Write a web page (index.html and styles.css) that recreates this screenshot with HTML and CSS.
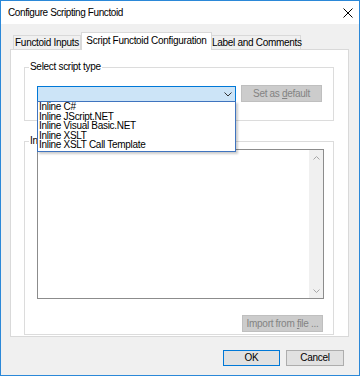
FILE: index.html
```html
<!DOCTYPE html>
<html lang="en">
<head>
    <meta charset="UTF-8">
    <title>Configure Scripting Functoid</title>
    <link rel="stylesheet" href="styles.css">
</head>
<body>
    <div class="window">
        <div class="titlebar">
            <span class="title">Configure Scripting Functoid</span>
            <svg class="close" width="10" height="10" viewBox="0 0 10 10">
                <path d="M0.5 0.5L9.5 9.5M9.5 0.5L0.5 9.5" stroke="#000" stroke-width="1" fill="none"/>
            </svg>
        </div>
        <div class="client">
            <div class="tabs">
                <div class="tab tab-inputs">Functoid Inputs</div>
                <div class="tab tab-config active">Script Functoid Configuration</div>
                <div class="tab tab-label">Label and Comments</div>
            </div>
            <div class="panel">
                <fieldset class="group group-type">
                    <legend>Select script <u>t</u>ype</legend>
                    <div class="row">
                        <div class="combo">
                            <svg class="chevron" width="8" height="5" viewBox="0 0 8 5">
                                <path d="M0.5 0.5L4 4L7.5 0.5" stroke="#333" stroke-width="1" fill="none"/>
                            </svg>
                            <ul class="droplist">
                                <li>Inline C#</li>
                                <li>Inline JScript.NET</li>
                                <li>Inline Visual Basic.NET</li>
                                <li>Inline XSLT</li>
                                <li>Inline XSLT Call Template</li>
                            </ul>
                        </div>
                        <button class="btn btn-default-set" disabled>Set as <u>d</u>efault</button>
                    </div>
                </fieldset>
                <fieldset class="group group-buffer">
                    <!-- the open list lies over most of this caption -->
                    <legend>Inline script buffer</legend>
                    <div class="buffer">
                        <div class="buffer-text"></div>
                        <div class="vscroll">
                            <svg width="7" height="4" viewBox="0 0 7 4"><path d="M0.5 3.5L3.5 0.5L6.5 3.5" stroke="#a6a6a6" fill="none"/></svg>
                            <svg width="7" height="4" viewBox="0 0 7 4"><path d="M0.5 0.5L3.5 3.5L6.5 0.5" stroke="#a6a6a6" fill="none"/></svg>
                        </div>
                    </div>
                    <div class="row row-right">
                        <button class="btn btn-import" disabled>Import from <u>f</u>ile ...</button>
                    </div>
                </fieldset>
            </div>
            <div class="actions">
                <button class="btn btn-ok">OK</button>
                <button class="btn btn-cancel">Cancel</button>
            </div>
        </div>
    </div>
</body>
</html>
```
FILE: styles.css
```css
* {
    box-sizing: border-box;
}
body {
    margin: 0;
    font-family: "Liberation Sans", Arial, sans-serif;
    font-size: 10px;
    letter-spacing: -0.3px;
    color: #000;
}
.window {
    width: 360px;
    height: 376px;
    border: 1px solid #2b88d8;
    background-color: #f0f0f0;
    display: flex;
    flex-direction: column;
}
.titlebar {
    height: 23px;
    background-color: #fff;
    display: flex;
    align-items: center;
    justify-content: space-between;
    padding: 0 6px 0 7px;
    letter-spacing: -0.4px;
}
.close {
    display: block;
}
.client {
    flex: 1;
    display: flex;
    flex-direction: column;
    padding: 8px 10px 0 9px;
}

/* tabs */
.tabs {
    display: flex;
    align-items: flex-end;
    height: 17px;
    margin-left: 3px;
    position: relative;
    z-index: 1;
}
.tab {
    height: 14px;
    border: 1px solid #d9d9d9;
    border-bottom: none;
    background-color: #f0f0f0;
    text-align: center;
    line-height: 14px;
    white-space: nowrap;
}
.tab-inputs { width: 68px; }
.tab-config { width: 131px; }
.tab-label { width: 90px; margin-left: -1px; }
.tab.active {
    height: 18px;
    margin-bottom: -1px;
    background-color: #fff;
    line-height: 15px;
    position: relative;
    z-index: 2;
}
.panel {
    height: 288px;
    border: 1px solid #d9d9d9;
    background-color: #fff;
    padding: 0 14px 0 13px;
}

/* group boxes */
.group {
    margin: 0;
    min-width: 0;
    border: 1px solid #dcdcdc;
    padding: 0 9px 0 12px;
}
.group legend {
    padding: 0 1px;
    margin-left: -8px;
    line-height: 12px;
}
.group legend u {
    text-decoration: none;
}
.group-type {
    margin-top: 11px;
    padding-top: 12px;
    padding-bottom: 18px;
}
.group-buffer {
    margin-top: 14px;
    padding-top: 2px;
    padding-bottom: 2px;
}
.row {
    display: flex;
    align-items: flex-end;
    gap: 5px;
}
.row-right {
    justify-content: flex-end;
    margin-top: 16px;
    padding-right: 1px;
}

/* combo box with open list */
.combo {
    position: relative;
    width: 199px;
    height: 16px;
    border: 1px solid #0078d7;
    background-color: #cce4f7;
}
.chevron {
    position: absolute;
    right: 3px;
    top: 5px;
}
.droplist {
    position: absolute;
    left: -1px;
    top: 14px;
    width: 199px;
    margin: 0;
    padding: 0 0 1px 1px;
    list-style: none;
    background-color: #fff;
    border: 1px solid #3f74bf;
    box-shadow: 2px 2px 2px rgba(0,0,0,0.2);
    z-index: 5;
}
.droplist li {
    line-height: 9.5px;
    white-space: nowrap;
}

/* buffer */
.buffer {
    display: flex;
    height: 150px;
    border: 1px solid #8c8c8c;
    background-color: #fff;
}
.buffer-text {
    flex: 1;
}
.vscroll {
    width: 14px;
    background-color: #f0f0f0;
    display: flex;
    flex-direction: column;
    justify-content: space-between;
    align-items: center;
    padding: 6px 0 5px;
}
.vscroll svg {
    display: block;
}

/* buttons */
.btn {
    font-family: inherit;
    font-size: 10px;
    letter-spacing: -0.3px;
    height: 17px;
    padding: 0;
    border: 1px solid #adadad;
    background-color: #e1e1e1;
    color: #000;
    line-height: 14px;
    white-space: nowrap;
}
.btn:disabled {
    background-color: #cccccc;
    border-color: #bfbfbf;
    color: #838383;
}
.btn-default-set { width: 81px; }
.btn-import { width: 81px; }
.actions {
    display: flex;
    justify-content: flex-end;
    gap: 6px;
    margin-top: 13px;
    padding-right: 5px;
}
.actions .btn {
    height: 16px;
}
.btn-ok {
    width: 57px;
    border-color: #0078d7;
}
.btn-cancel {
    width: 58px;
}
```
